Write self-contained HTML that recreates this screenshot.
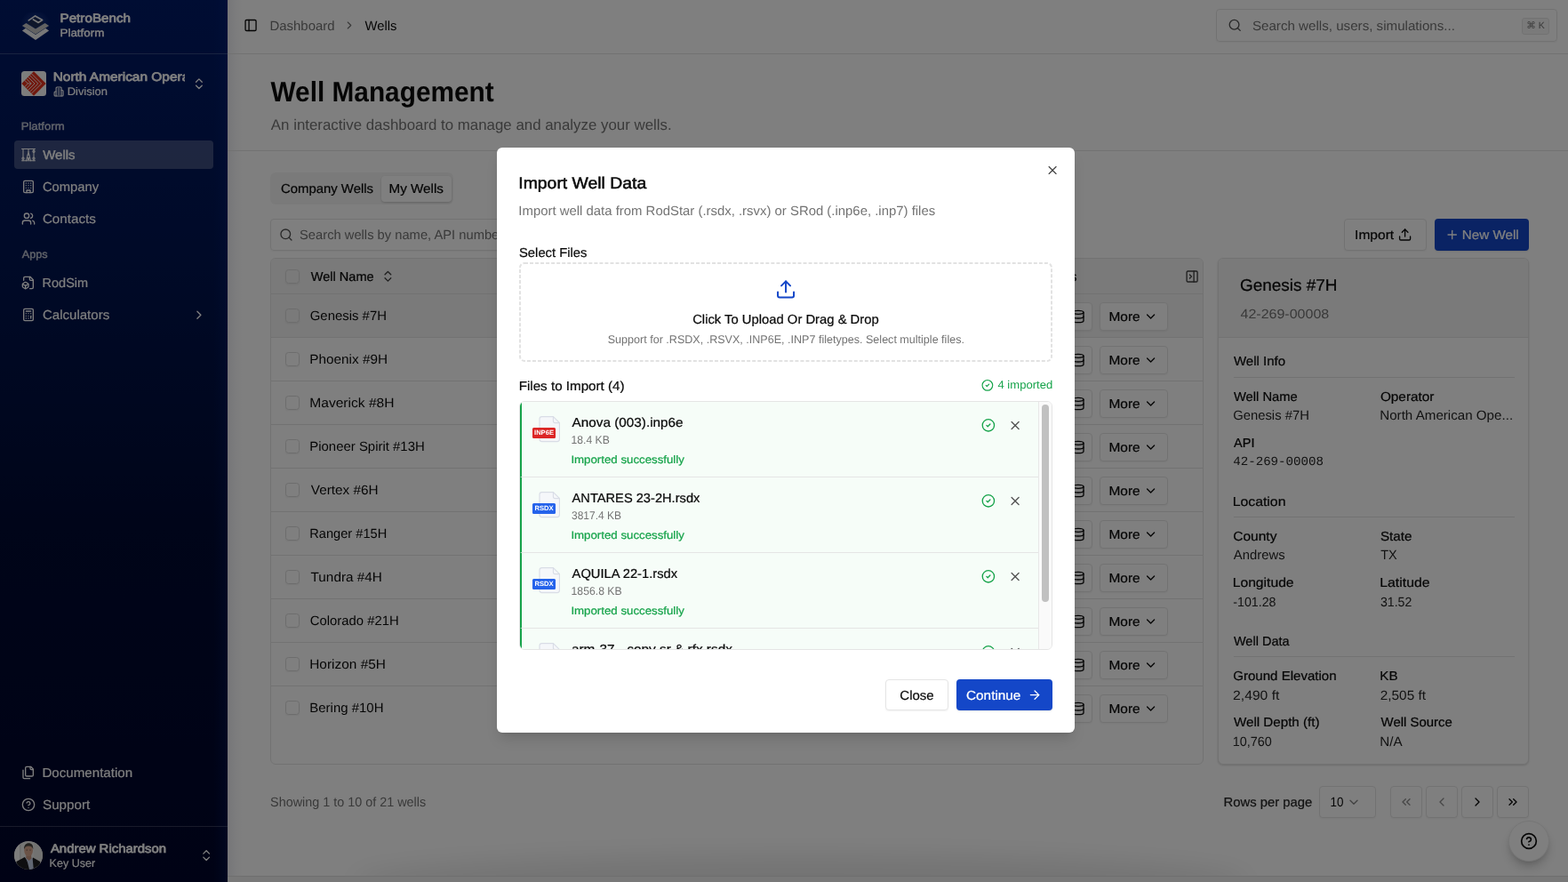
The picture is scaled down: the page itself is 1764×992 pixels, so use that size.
<!DOCTYPE html>
<html lang="en">
<head>
<meta charset="utf-8">
<title>Well Management – PetroBench Platform</title>
<meta name="viewport" content="width=1764, initial-scale=1">
<style>
*{box-sizing:border-box;margin:0;padding:0}
html,body{width:1764px;height:992px;overflow:hidden;background:#fff}
body{text-rendering:geometricPrecision;font-family:"Liberation Sans",sans-serif;font-size:14.8px;line-height:20px;color:#0a0a0a;position:relative}
svg{display:block;flex:none}
button{font:inherit;color:inherit;background:none;border:0;text-rendering:inherit;letter-spacing:inherit;text-align:left;padding:0;margin:0}
h1,h2,h3,h4,p,label{font-weight:400;font-size:inherit}
.abs{position:absolute}
.x{position:absolute;white-space:nowrap;display:block}
.r{-webkit-text-stroke:0}
.m{-webkit-text-stroke:.22px currentColor}
.sb{-webkit-text-stroke:.52px currentColor}
#sidebar .r{-webkit-text-stroke:.16px currentColor}
#sidebar .m{-webkit-text-stroke:.38px currentColor}
#sidebar .sb{-webkit-text-stroke:.72px currentColor}
.b{font-weight:700}
.mono{font-family:"Liberation Mono","DejaVu Sans Mono",monospace}
#sidebar,#main,#dlg,#overlay{will-change:transform}

/* ---------- sidebar ---------- */
#sidebar{position:absolute;left:0;top:0;width:256px;height:992px;color:#fff;
  background:linear-gradient(90deg,rgba(0,30,120,0) 0,rgba(0,30,120,0) 240px,rgba(0,40,140,.22) 256px),linear-gradient(180deg,#001a66 0,#00144f 30%,#000a32 60%,#00052a 100%)}
#sidebar .brand{position:absolute;left:0;top:0;width:256px;height:61px;border-bottom:1px solid rgba(255,255,255,.2)}
#sidebar .logo{position:absolute;left:24px;top:14px}
#sidebar .olog{position:absolute;left:24px;top:80px;width:28px;height:28px;border-radius:3.5px;overflow:hidden}
#sidebar .oname{position:absolute;left:56px;top:78px;width:152.3px;height:20px;overflow:hidden}
#sidebar .glabel{color:rgba(245,245,245,.7)}
#sidebar .item{position:absolute;left:16px;width:224px;height:32px;border-radius:4px;display:block;color:inherit}
#sidebar .item.active{background:rgba(255,255,255,.235)}
#sidebar .foot{position:absolute;left:0;top:929px;width:256px;height:63px;border-top:1px solid rgba(255,255,255,.2)}
#sidebar .avatar{position:absolute;left:16px;top:946px;width:32px;height:32px;border-radius:50%;overflow:hidden}

/* ---------- main ---------- */
#main{position:absolute;left:256px;top:0;width:1508px;height:992px;background:#fff}
#main .sbshadow{position:absolute;left:0;top:0;width:18px;height:992px;background:linear-gradient(90deg,rgba(20,30,90,.09),rgba(20,30,90,.03) 45%,rgba(20,30,90,0))}
#topbar{position:absolute;left:0;top:0;width:1508px;height:61px;border-bottom:1px solid #e5e5e5}
.search{position:absolute;left:1112px;top:10px;width:384px;height:37px;border:1px solid #e5e5e5;border-radius:4px;box-shadow:0 1px 2px rgba(0,0,0,.05)}
kbd{position:absolute;left:343px;top:9px;width:31px;height:19px;border:1px solid #e5e5e5;border-radius:3px;background:#f5f5f5;font-family:"Liberation Sans","DejaVu Sans",sans-serif;font-size:10.5px;line-height:17px;text-align:center;color:#737373}
#phead{position:absolute;left:0;top:61px;width:1508px;height:109px;border-bottom:1px solid #e5e5e5}
.tabs{position:absolute;left:48px;top:194px;width:206px;height:36px;border-radius:6px;background:#f5f5f5}
.tabs .on{position:absolute;left:125px;top:4px;width:79px;height:29px;background:#fff;border-radius:4px;box-shadow:0 1px 3px rgba(0,0,0,.12),0 1px 2px rgba(0,0,0,.08)}
.wsearch{position:absolute;left:48px;top:246px;width:384px;height:36px;border:1px solid #e5e5e5;border-radius:4px;box-shadow:0 1px 2px rgba(0,0,0,.05)}
.btn{position:absolute;height:36px;border-radius:4px;display:block}
.btn.outline{border:1px solid #e5e5e5;background:#fff;box-shadow:0 1px 2px rgba(0,0,0,.05)}
.btn.primary{background:#1447c8;color:#fff;box-shadow:0 1px 2px rgba(0,0,0,.1)}
#tbl{position:absolute;left:48px;top:290px;width:1050px;height:570px;border:1px solid #e5e5e5;border-radius:6px;overflow:hidden;background:#fff}
#tbl .hrow{position:absolute;left:0;top:0;width:1048px;height:40px;background:#f4f4f4;border-bottom:1px solid #e5e5e5}
#tbl .row{position:absolute;left:0;width:1048px;height:49px;border-bottom:1px solid #e5e5e5}
#tbl .row.sel{background:#f4f4f4}
#tbl .row.last{border-bottom:0}
.cb{position:absolute;left:16px;width:16px;height:16px;border:1px solid #dadada;border-radius:3.5px;box-shadow:0 1px 2px rgba(0,0,0,.06)}
#tbl .more{position:absolute;left:932px;top:9px;width:77px;height:32px;border:1px solid #e5e5e5;border-radius:4px;background:#fff;box-shadow:0 1px 2px rgba(0,0,0,.05)}
#tbl .dbb{position:absolute;left:892px;top:9px;width:32px;height:32px;border:1px solid #e5e5e5;border-radius:4px;background:#fff;box-shadow:0 1px 2px rgba(0,0,0,.05)}
#detail{position:absolute;left:1114px;top:290px;width:350px;height:570px;border:1px solid #e5e5e5;border-radius:6px;overflow:hidden;background:#fff;box-shadow:0 1px 3px rgba(0,0,0,.1),0 1px 2px rgba(0,0,0,.06)}
#detail .dh{position:absolute;left:0;top:0;width:348px;height:89px;background:#f5f5f5;border-bottom:1px solid #e5e5e5}
#detail hr{position:absolute;left:16.5px;width:316px;height:1px;border:0;background:#e5e5e5}
.pbtn{position:absolute;top:884px;display:block;width:36px;height:36px;border:1px solid #e5e5e5;border-radius:4px;background:#fff;box-shadow:0 1px 2px rgba(0,0,0,.05)}
.pbtn.dis svg{opacity:.45}
#help{position:absolute;left:1441px;top:923px;width:46px;height:46px;border-radius:50%;background:#fff;border:1px solid #ececec;box-shadow:0 8px 14px -3px rgba(0,0,0,.22),0 3px 6px -2px rgba(0,0,0,.12)}
#botline{position:absolute;left:0;top:985px;width:1508px;height:7px;background:#f0f0f0;border-top:1px solid #dedede}
#botblur{position:absolute;left:140px;top:962px;width:1010px;height:60px;border-radius:50%;background:rgba(0,0,0,.09);filter:blur(14px)}

/* ---------- overlay + dialog ---------- */
#overlay{position:absolute;left:0;top:0;width:1764px;height:992px;background:rgba(0,0,0,.5)}
#dlg{position:absolute;left:559px;top:166px;width:650px;height:658px;background:#fff;border-radius:6px;box-shadow:0 10px 15px -3px rgba(0,0,0,.13),0 4px 6px -4px rgba(0,0,0,.13)}
#drop{position:absolute;left:25px;top:129.4px;width:600px;height:112px}
#flist{position:absolute;left:25px;top:285px;width:600px;height:280px;border:1px solid #e5e5e5;border-radius:6px;overflow:hidden;background:#fff}
#flist .fi{position:absolute;left:0;width:583px;height:85px;background:#f6fdf8;border-left:2px solid #16a34a;border-bottom:1px solid #e5e5e5}
#flist .sb_{position:absolute;left:583px;top:0;width:15px;height:278px;background:#fafafa;border-left:1px solid #e8e8e8}
#flist .sb_ i{position:absolute;left:3px;top:3px;width:8px;height:222px;border-radius:4px;background:#c1c1c1}
.ficon{position:absolute;left:12px;top:14px;width:34px;height:32px}
.badge{position:absolute;left:0;top:15px;width:26px;height:11.5px;border-radius:1.5px;color:#fff;font-size:7.6px;line-height:11.5px;font-weight:700;text-align:center;white-space:nowrap;overflow:hidden}
</style>
</head>
<body>
<aside id="sidebar" aria-label="Sidebar">
<div class="brand">
<svg class="logo" width="32" height="32" viewBox="0 0 32 32" aria-hidden="true">
<defs><radialGradient id="lg" cx="50%" cy="45%" r="50%"><stop offset="0" stop-color="#3a5aa8" stop-opacity=".5"/><stop offset=".6" stop-color="#3a5aa8" stop-opacity=".22"/><stop offset="1" stop-color="#3a5aa8" stop-opacity="0"/></radialGradient></defs>
<circle cx="16" cy="15" r="17" fill="url(#lg)"/>
<path d="M.9 20.4 16 31 31.1 20.4 27.2 17.7 16 24.9 4.8 17.7Z" fill="#f0f0f0"/>
<path d="M.9 14.9 16 24.5 31.1 14.9 26.6 12 16 18.6 5.4 12Z" fill="#c4c4c4"/>
<path d="M6.6 11.6 16 5.4 25.4 11.6 16 18Z" fill="#1d2c55"/>
<path d="M8.3 8.9 15.6 3.9 23.6 8.5 19.3 11.4 13.4 7.9" fill="none" stroke="#f0f0f0" stroke-width="1.7" stroke-linejoin="round" stroke-linecap="round"/>
</svg>
<span class="x sb" style="transform:translateX(0.51px) scaleX(1.1066);transform-origin:0 0;left:67px;top:11px;font-size:13.76px;line-height:20px;">PetroBench</span>
<span class="x m" style="transform:translateX(0.49px) scaleX(1.1052);transform-origin:0 0;left:67px;top:29px;font-size:12.14px;line-height:16px;">Platform</span>
</div>
<span class="olog"><svg width="28" height="28" viewBox="0 0 28 28" aria-hidden="true">
<rect width="28" height="28" fill="#fbfbfb"/>
<path d="M14 .3 27.7 14 14 27.7 .3 14Z" fill="#e2311d"/>
<g fill="none" stroke="#fbfbfb" stroke-width=".85">
<path d="M11.3 2.7 22.6 14 11.3 25.3"/><path d="M9.4 4.6 18.8 14 9.4 23.4"/><path d="M7.5 6.5 15 14 7.5 21.5"/><path d="M5.6 8.4 11.2 14 5.6 19.6"/><path d="M3.7 10.3 7.4 14 3.7 17.7"/>
<path d="M11.2 14H7.4"/>
</g></svg></span>
<span class="oname"><span class="x sb" style="transform:translateX(0.64px) scaleX(1.1228);transform-origin:0 0;left:3px;top:-1px;font-size:13.76px;line-height:20px;">North American Operations</span></span>
<svg style="position:absolute;left:60px;top:97px;;overflow:visible" width="12" height="12" viewBox="0 0 24 24" fill="none" stroke="currentColor" stroke-width="2.2" stroke-linecap="round" stroke-linejoin="round" aria-hidden="true"><g transform="translate(0.2 0)"><path d="M6 22V4a2 2 0 0 1 2-2h8a2 2 0 0 1 2 2v18Z"/><path d="M6 12H4a2 2 0 0 0-2 2v6a2 2 0 0 0 2 2h2"/><path d="M18 9h2a2 2 0 0 1 2 2v9a2 2 0 0 1-2 2h-2"/><path d="M10 6h4"/><path d="M10 10h4"/><path d="M10 14h4"/><path d="M10 18h4"/></g></svg>
<span class="x r" style="transform:translateX(0.68px) scaleX(1.0386);transform-origin:0 0;left:75px;top:95px;font-size:12.46px;line-height:16px;">Division</span>
<svg style="position:absolute;left:215px;top:86px;;overflow:visible" width="16" height="16" viewBox="0 0 24 24" fill="none" stroke="currentColor" stroke-width="2" stroke-linecap="round" stroke-linejoin="round" aria-hidden="true"><g transform="translate(1.35 0.3)"><path d="m7 15 5 5 5-5"/><path d="m7 9 5-5 5 5"/></g></svg>
<nav aria-label="Main navigation">
<span class="x m glabel" style="transform:translateX(0.68px) scaleX(1.0844);transform-origin:0 0;left:23px;top:134px;font-size:12.14px;line-height:16px;">Platform</span>
<a class="item active" style="top:158px"><svg style="position:absolute;left:8px;top:8px;" width="16" height="16" viewBox="0 0 24 24" fill="none" stroke="currentColor" stroke-width="1.6" stroke-linecap="round" stroke-linejoin="round" aria-hidden="true"><path d="M.8 2.2h22.4"/><path d="M.8 22.2h22.4"/><path d="M3 2.2v20"/><path d="M21 2.2v20"/><path d="M8.2 22.2 12 7.2l3.8 15"/><path d="M9.6 17h4.8"/><path d="M10.7 12.4h2.6"/><path d="M12 2.2v5"/><circle cx="3" cy="18.2" r="1.7"/><circle cx="21" cy="18.2" r="1.7"/><circle cx="21" cy="6.4" r="1.7"/><circle cx="12" cy="19.4" r="1.1"/></svg><span class="x m" style="transform:translateX(0.22px) scaleX(1.0506);transform-origin:0 0;left:32px;top:7px;font-size:14.25px;line-height:20px;">Wells</span></a>
<a class="item" style="top:194px"><svg style="position:absolute;left:8px;top:8px;" width="16" height="16" viewBox="0 0 24 24" fill="none" stroke="currentColor" stroke-width="2" stroke-linecap="round" stroke-linejoin="round" aria-hidden="true"><rect x="4" y="2" width="16" height="20" rx="2"/><path d="M9 22v-4h6v4"/><path d="M8 6h.01"/><path d="M16 6h.01"/><path d="M12 6h.01"/><path d="M12 10h.01"/><path d="M12 14h.01"/><path d="M16 10h.01"/><path d="M16 14h.01"/><path d="M8 10h.01"/><path d="M8 14h.01"/></svg><span class="x r" style="transform:translateX(0.89px) scaleX(1.0143);transform-origin:0 0;left:31px;top:7px;font-size:14.57px;line-height:20px;">Company</span></a>
<a class="item" style="top:230px"><svg style="position:absolute;left:8px;top:8px;" width="16" height="16" viewBox="0 0 24 24" fill="none" stroke="currentColor" stroke-width="2" stroke-linecap="round" stroke-linejoin="round" aria-hidden="true"><path d="M16 21v-2a4 4 0 0 0-4-4H6a4 4 0 0 0-4 4v2"/><circle cx="9" cy="7" r="4"/><path d="M22 21v-2a4 4 0 0 0-3-3.87"/><path d="M16 3.13a4 4 0 0 1 0 7.75"/></svg><span class="x r" style="transform:translateX(0.91px) scaleX(1.0416);transform-origin:0 0;left:31px;top:7px;font-size:14.57px;line-height:20px;">Contacts</span></a>
<span class="x m glabel" style="transform:translateX(0.87px) scaleX(1.0420);transform-origin:0 0;left:24px;top:278px;font-size:12.14px;line-height:16px;">Apps</span>
<a class="item" style="top:302px"><svg style="position:absolute;left:8px;top:8px;" width="16" height="16" viewBox="0 0 24 24" fill="none" stroke="currentColor" stroke-width="2" stroke-linecap="round" stroke-linejoin="round" aria-hidden="true"><path d="M14.5 22H18a2 2 0 0 0 2-2V7l-5-5H6a2 2 0 0 0-2 2v4"/><path d="M14 2v4a2 2 0 0 0 2 2h4"/><path d="M3 13.1a2 2 0 0 0-1 1.76v3.24a2 2 0 0 0 .97 1.78L6 21.7a2 2 0 0 0 2.03.01L11 19.9a2 2 0 0 0 1-1.76V14.9a2 2 0 0 0-.97-1.78L8 11.3a2 2 0 0 0-2.03-.01Z"/><path d="M7 17v5"/><path d="M11.7 14.2 7 17l-4.7-2.8"/></svg><span class="x r" style="transform:translateX(0.59px) scaleX(0.9939);transform-origin:0 0;left:31px;top:7px;font-size:14.57px;line-height:20px;">RodSim</span></a>
<a class="item" style="top:338px"><svg style="position:absolute;left:8px;top:8px;" width="16" height="16" viewBox="0 0 24 24" fill="none" stroke="currentColor" stroke-width="2" stroke-linecap="round" stroke-linejoin="round" aria-hidden="true"><rect x="4" y="2" width="16" height="20" rx="2"/><path d="M8 6h8"/><path d="M16 14v4"/><path d="M16 10h.01"/><path d="M12 10h.01"/><path d="M8 10h.01"/><path d="M12 14h.01"/><path d="M8 14h.01"/><path d="M12 18h.01"/><path d="M8 18h.01"/></svg><span class="x r" style="transform:translateX(0.92px) scaleX(1.0330);transform-origin:0 0;left:31px;top:7px;font-size:14.57px;line-height:20px;">Calculators</span><svg style="position:absolute;left:199px;top:8px;;overflow:visible" width="16" height="16" viewBox="0 0 24 24" fill="none" stroke="currentColor" stroke-width="2" stroke-linecap="round" stroke-linejoin="round" aria-hidden="true"><g transform="translate(1.35 0.3)"><path d="m9 18 6-6-6-6"/></g></svg></a>
<a class="item" style="top:853px"><svg style="position:absolute;left:8px;top:8px;" width="16" height="16" viewBox="0 0 24 24" fill="none" stroke="currentColor" stroke-width="2" stroke-linecap="round" stroke-linejoin="round" aria-hidden="true"><path d="M20 7h-3a2 2 0 0 1-2-2V2"/><path d="M9 18a2 2 0 0 1-2-2V4a2 2 0 0 1 2-2h7l4 4v10a2 2 0 0 1-2 2Z"/><path d="M3 7.6v12.8A1.6 1.6 0 0 0 4.6 22h9.8"/></svg><span class="x r" style="transform:translateX(0.44px) scaleX(1.0379);transform-origin:0 0;left:31px;top:7px;font-size:14.57px;line-height:20px;">Documentation</span></a>
<a class="item" style="top:889px"><svg style="position:absolute;left:8px;top:8px;" width="16" height="16" viewBox="0 0 24 24" fill="none" stroke="currentColor" stroke-width="2" stroke-linecap="round" stroke-linejoin="round" aria-hidden="true"><circle cx="12" cy="12" r="10"/><path d="M9.09 9a3 3 0 0 1 5.83 1c0 2-3 3-3 3"/><path d="M12 17h.01"/></svg><span class="x r" style="transform:translateX(0.99px) scaleX(1.0436);transform-origin:0 0;left:31px;top:7px;font-size:14.57px;line-height:20px;">Support</span></a>
</nav>
<div class="foot"></div>
<span class="avatar"><svg width="32" height="32" viewBox="0 0 32 32" aria-hidden="true">
<rect width="32" height="32" fill="#ededeb"/>
<rect x="0" y="0" width="6" height="32" fill="#fafaf8"/><rect x="6" y="0" width="1.5" height="32" fill="#d9d9d7"/>
<rect x="22" y="0" width="10" height="32" fill="#e4e4e2"/>
<path d="M2.5 23 11.8 18 17 25l4.1-6.4L29 23l2 9H1Z" fill="#1d1d20"/>
<path d="M12.4 17.4 20.6 18.8 21.8 32H17l-2-8Z" fill="#c3cee6"/>
<path d="M13.6 14.5h5.4l.4 5-2.6 2.6-3.6-3Z" fill="#c99883"/>
<ellipse cx="16.1" cy="10.6" rx="4.9" ry="6.5" fill="#d7a68f"/>
<path d="M11 9.4C10.8 4.4 13.4 2.3 16.3 2.3c3.2 0 5.2 1.9 5 7.1-.8-2.8-2.2-4-5.100-4s-4.300 1.200-5.200 4Z" fill="#4b4641"/>
<circle cx="14.200" cy="10" r=".55" fill="#3a2f2a"/><circle cx="18" cy="10" r=".55" fill="#3a2f2a"/>
</svg></span>
<span class="x sb" style="transform:translateX(0.9px) scaleX(1.0848);transform-origin:0 0;left:56px;top:945px;font-size:13.76px;line-height:20px;">Andrew Richardson</span>
<span class="x r" style="transform:translateX(0.62px) scaleX(1.0070);transform-origin:0 0;left:55px;top:963px;font-size:12.46px;line-height:16px;">Key User</span>
<svg style="position:absolute;left:224px;top:954px;;overflow:visible" width="16" height="16" viewBox="0 0 24 24" fill="none" stroke="currentColor" stroke-width="2" stroke-linecap="round" stroke-linejoin="round" aria-hidden="true"><g transform="translate(0.225 0.15)"><path d="m7 15 5 5 5-5"/><path d="m7 9 5-5 5 5"/></g></svg>
</aside>
<main id="main">
<div class="sbshadow"></div>
<header id="topbar">
<svg style="position:absolute;left:18px;top:20px;;overflow:visible" width="16" height="16" viewBox="0 0 24 24" fill="none" stroke="currentColor" stroke-width="2" stroke-linecap="round" stroke-linejoin="round" aria-hidden="true"><g transform="translate(0.105 0.75)"><rect x="3" y="3" width="18" height="18" rx="2"/><path d="M9 3v18"/></g></svg>
<nav aria-label="Breadcrumb">
<span class="x r" style="transform:translateX(0.47px) scaleX(1.0096);transform-origin:0 0;left:47px;top:20px;font-size:14.8px;line-height:20px;color:#737373;">Dashboard</span>
<svg style="position:absolute;left:130px;top:21px;color:#737373;;overflow:visible" width="14" height="14" viewBox="0 0 24 24" fill="none" stroke="currentColor" stroke-width="2" stroke-linecap="round" stroke-linejoin="round" aria-hidden="true"><g transform="translate(0 0.857)"><path d="m9 18 6-6-6-6"/></g></svg>
<span class="x r" style="transform:translateX(0.58px);transform-origin:0 0;left:154px;top:20px;font-size:14.8px;line-height:20px;">Wells</span>
</nav>
<div class="search" role="search">
<svg style="position:absolute;left:12px;top:9px;color:#525252;;overflow:visible" width="16" height="16" viewBox="0 0 24 24" fill="none" stroke="currentColor" stroke-width="2" stroke-linecap="round" stroke-linejoin="round" aria-hidden="true"><g transform="translate(0.3 0.6)"><circle cx="11" cy="11" r="8"/><path d="m21 21-4.3-4.3"/></g></svg>
<span class="x r" style="transform:translateX(0.91px) scaleX(1.0234);transform-origin:0 0;left:39px;top:9px;font-size:14.8px;line-height:20px;color:#737373;">Search wells, users, simulations...</span>
<kbd>⌘ K</kbd>
</div>
</header>
<section id="phead"></section>
<h1 class="x b" style="transform:translateX(0.51px) scaleX(0.9396);transform-origin:0 0;left:48px;top:85px;font-size:31.72px;line-height:36px;">Well Management</h1>
<p class="x r" style="transform:translateX(0.87px) scaleX(0.9972);transform-origin:0 0;left:48px;top:129px;font-size:16.92px;line-height:24px;color:#737373;">An interactive dashboard to manage and analyze your wells.</p>
<div class="tabs" role="tablist">
<span class="x m" style="transform:translateX(0.95px) scaleX(1.0298);transform-origin:0 0;left:11px;top:9px;font-size:14.48px;line-height:20px;">Company Wells</span>
<span class="on" role="tab" aria-selected="true"><span class="x m" style="transform:translateX(0.46px) scaleX(1.0524);transform-origin:0 0;left:8px;top:5px;font-size:14.48px;line-height:20px;">My Wells</span></span>
</div>
<div class="wsearch">
<svg style="position:absolute;left:8px;top:9px;color:#525252;;overflow:visible" width="16" height="16" viewBox="0 0 24 24" fill="none" stroke="currentColor" stroke-width="2" stroke-linecap="round" stroke-linejoin="round" aria-hidden="true"><g transform="translate(1.42 0)"><circle cx="11" cy="11" r="8"/><path d="m21 21-4.3-4.3"/></g></svg>
<span class="x r" style="transform:translateX(0.03px) scaleX(0.9951);transform-origin:0 0;left:32px;top:8px;font-size:14.8px;line-height:20px;color:#737373;">Search wells by name, API number, or operator...</span>
</div>
<button class="btn outline" style="left:1256px;top:246px;width:93px">
<span class="x m" style="transform:translateX(0.07px) scaleX(1.0760);transform-origin:0 0;left:11px;top:8px;font-size:14.48px;line-height:20px;">Import</span>
<svg style="position:absolute;left:59px;top:9px;;overflow:visible" width="16" height="16" viewBox="0 0 24 24" fill="none" stroke="currentColor" stroke-width="2" stroke-linecap="round" stroke-linejoin="round" aria-hidden="true"><g transform="translate(0.9 0)"><path d="M21 15v4a2 2 0 0 1-2 2H5a2 2 0 0 1-2-2v-4"/><path d="m17 8-5-5-5 5"/><path d="M12 3v12"/></g></svg>
</button>
<button class="btn primary" style="left:1358px;top:246px;width:106px">
<svg style="position:absolute;left:11px;top:10px;color:#fff;;overflow:visible" width="16" height="16" viewBox="0 0 24 24" fill="none" stroke="currentColor" stroke-width="2" stroke-linecap="round" stroke-linejoin="round" aria-hidden="true"><g transform="translate(1.05 0)"><path d="M5 12h14"/><path d="M12 5v14"/></g></svg>
<span class="x m" style="transform:translateX(0.86px) scaleX(1.0493);transform-origin:0 0;left:30px;top:9px;font-size:14.48px;line-height:20px;color:#fff;">New Well</span>
</button>
<div id="tbl" role="table">
<div class="hrow" role="row">
<span class="cb" style="top:11.5px"></span>
<span class="x m" style="transform:translateX(0.75px) scaleX(1.0055);transform-origin:0 0;left:44px;top:11px;font-size:14.48px;line-height:20px;">Well Name</span>
<svg style="position:absolute;left:123px;top:11px;color:#404040;;overflow:visible" width="16" height="16" viewBox="0 0 24 24" fill="none" stroke="currentColor" stroke-width="2" stroke-linecap="round" stroke-linejoin="round" aria-hidden="true"><g transform="translate(0.6 1.2)"><path d="m7 15 5 5 5-5"/><path d="m7 9 5-5 5 5"/></g></svg>
<span class="x m" style="transform:translateX(0.58px) scaleX(1.0720);transform-origin:0 0;left:855px;top:11px;font-size:14.48px;line-height:20px;">Actions</span>
<svg style="position:absolute;left:1028px;top:12px;color:#404040;;overflow:visible" width="16" height="16" viewBox="0 0 24 24" fill="none" stroke="currentColor" stroke-width="2" stroke-linecap="round" stroke-linejoin="round" aria-hidden="true"><g transform="translate(0.15 0)"><rect x="3" y="3" width="18" height="18" rx="2"/><path d="M15 3v18"/><path d="m8 9 3 3-3 3"/></g></svg>
</div>
<div class="row sel" role="row" style="top:40px">
<span class="cb" style="top:16px"></span>
<span class="x r" style="transform:translateX(0.75px) scaleX(1.0078);transform-origin:0 0;left:43px;top:15px;font-size:14.8px;line-height:20px;">Genesis #7H</span>
<span class="dbb"><svg style="position:absolute;left:7px;top:7px" width="16" height="16" viewBox="0 0 24 24" fill="none" stroke="currentColor" stroke-width="2" stroke-linecap="round" stroke-linejoin="round" aria-hidden="true"><ellipse cx="12" cy="5" rx="9" ry="3"/><path d="M3 5v14a9 3 0 0 0 18 0V5"/><path d="M3 12a9 3 0 0 0 18 0"/></svg></span>
<button class="more"><span class="x m" style="transform:translateX(0.44px) scaleX(1.0688);transform-origin:0 0;left:9px;top:6px;font-size:14.48px;line-height:20px;">More</span><svg style="position:absolute;left:48px;top:7px;;overflow:visible" width="16" height="16" viewBox="0 0 24 24" fill="none" stroke="currentColor" stroke-width="2" stroke-linecap="round" stroke-linejoin="round" aria-hidden="true"><g transform="translate(0.9 0)"><path d="m6 9 6 6 6-6"/></g></svg></button>
</div>
<div class="row" role="row" style="top:89px">
<span class="cb" style="top:16px"></span>
<span class="x r" style="transform:translateX(0.24px) scaleX(1.0357);transform-origin:0 0;left:43px;top:15px;font-size:14.8px;line-height:20px;">Phoenix #9H</span>
<span class="dbb"><svg style="position:absolute;left:7px;top:7px" width="16" height="16" viewBox="0 0 24 24" fill="none" stroke="currentColor" stroke-width="2" stroke-linecap="round" stroke-linejoin="round" aria-hidden="true"><ellipse cx="12" cy="5" rx="9" ry="3"/><path d="M3 5v14a9 3 0 0 0 18 0V5"/><path d="M3 12a9 3 0 0 0 18 0"/></svg></span>
<button class="more"><span class="x m" style="transform:translateX(0.44px) scaleX(1.0688);transform-origin:0 0;left:9px;top:6px;font-size:14.48px;line-height:20px;">More</span><svg style="position:absolute;left:48px;top:7px;;overflow:visible" width="16" height="16" viewBox="0 0 24 24" fill="none" stroke="currentColor" stroke-width="2" stroke-linecap="round" stroke-linejoin="round" aria-hidden="true"><g transform="translate(0.9 0)"><path d="m6 9 6 6 6-6"/></g></svg></button>
</div>
<div class="row" role="row" style="top:138px">
<span class="cb" style="top:16px"></span>
<span class="x r" style="transform:translateX(0.22px) scaleX(1.0536);transform-origin:0 0;left:43px;top:15px;font-size:14.8px;line-height:20px;">Maverick #8H</span>
<span class="dbb"><svg style="position:absolute;left:7px;top:7px" width="16" height="16" viewBox="0 0 24 24" fill="none" stroke="currentColor" stroke-width="2" stroke-linecap="round" stroke-linejoin="round" aria-hidden="true"><ellipse cx="12" cy="5" rx="9" ry="3"/><path d="M3 5v14a9 3 0 0 0 18 0V5"/><path d="M3 12a9 3 0 0 0 18 0"/></svg></span>
<button class="more"><span class="x m" style="transform:translateX(0.44px) scaleX(1.0688);transform-origin:0 0;left:9px;top:6px;font-size:14.48px;line-height:20px;">More</span><svg style="position:absolute;left:48px;top:7px;;overflow:visible" width="16" height="16" viewBox="0 0 24 24" fill="none" stroke="currentColor" stroke-width="2" stroke-linecap="round" stroke-linejoin="round" aria-hidden="true"><g transform="translate(0.9 0)"><path d="m6 9 6 6 6-6"/></g></svg></button>
</div>
<div class="row" role="row" style="top:187px">
<span class="cb" style="top:16px"></span>
<span class="x r" style="transform:translateX(0.28px) scaleX(1.0088);transform-origin:0 0;left:43px;top:15px;font-size:14.8px;line-height:20px;">Pioneer Spirit #13H</span>
<span class="dbb"><svg style="position:absolute;left:7px;top:7px" width="16" height="16" viewBox="0 0 24 24" fill="none" stroke="currentColor" stroke-width="2" stroke-linecap="round" stroke-linejoin="round" aria-hidden="true"><ellipse cx="12" cy="5" rx="9" ry="3"/><path d="M3 5v14a9 3 0 0 0 18 0V5"/><path d="M3 12a9 3 0 0 0 18 0"/></svg></span>
<button class="more"><span class="x m" style="transform:translateX(0.44px) scaleX(1.0688);transform-origin:0 0;left:9px;top:6px;font-size:14.48px;line-height:20px;">More</span><svg style="position:absolute;left:48px;top:7px;;overflow:visible" width="16" height="16" viewBox="0 0 24 24" fill="none" stroke="currentColor" stroke-width="2" stroke-linecap="round" stroke-linejoin="round" aria-hidden="true"><g transform="translate(0.9 0)"><path d="m6 9 6 6 6-6"/></g></svg></button>
</div>
<div class="row" role="row" style="top:236px">
<span class="cb" style="top:16px"></span>
<span class="x r" style="transform:translateX(0.83px) scaleX(1.0355);transform-origin:0 0;left:44px;top:15px;font-size:14.8px;line-height:20px;">Vertex #6H</span>
<span class="dbb"><svg style="position:absolute;left:7px;top:7px" width="16" height="16" viewBox="0 0 24 24" fill="none" stroke="currentColor" stroke-width="2" stroke-linecap="round" stroke-linejoin="round" aria-hidden="true"><ellipse cx="12" cy="5" rx="9" ry="3"/><path d="M3 5v14a9 3 0 0 0 18 0V5"/><path d="M3 12a9 3 0 0 0 18 0"/></svg></span>
<button class="more"><span class="x m" style="transform:translateX(0.44px) scaleX(1.0688);transform-origin:0 0;left:9px;top:6px;font-size:14.48px;line-height:20px;">More</span><svg style="position:absolute;left:48px;top:7px;;overflow:visible" width="16" height="16" viewBox="0 0 24 24" fill="none" stroke="currentColor" stroke-width="2" stroke-linecap="round" stroke-linejoin="round" aria-hidden="true"><g transform="translate(0.9 0)"><path d="m6 9 6 6 6-6"/></g></svg></button>
</div>
<div class="row" role="row" style="top:285px">
<span class="cb" style="top:16px"></span>
<span class="x r" style="transform:translateX(0.3px) scaleX(0.9872);transform-origin:0 0;left:43px;top:15px;font-size:14.8px;line-height:20px;">Ranger #15H</span>
<span class="dbb"><svg style="position:absolute;left:7px;top:7px" width="16" height="16" viewBox="0 0 24 24" fill="none" stroke="currentColor" stroke-width="2" stroke-linecap="round" stroke-linejoin="round" aria-hidden="true"><ellipse cx="12" cy="5" rx="9" ry="3"/><path d="M3 5v14a9 3 0 0 0 18 0V5"/><path d="M3 12a9 3 0 0 0 18 0"/></svg></span>
<button class="more"><span class="x m" style="transform:translateX(0.44px) scaleX(1.0688);transform-origin:0 0;left:9px;top:6px;font-size:14.48px;line-height:20px;">More</span><svg style="position:absolute;left:48px;top:7px;;overflow:visible" width="16" height="16" viewBox="0 0 24 24" fill="none" stroke="currentColor" stroke-width="2" stroke-linecap="round" stroke-linejoin="round" aria-hidden="true"><g transform="translate(0.9 0)"><path d="m6 9 6 6 6-6"/></g></svg></button>
</div>
<div class="row" role="row" style="top:334px">
<span class="cb" style="top:16px"></span>
<span class="x r" style="transform:translateX(0.56px) scaleX(1.0354);transform-origin:0 0;left:44px;top:15px;font-size:14.8px;line-height:20px;">Tundra #4H</span>
<span class="dbb"><svg style="position:absolute;left:7px;top:7px" width="16" height="16" viewBox="0 0 24 24" fill="none" stroke="currentColor" stroke-width="2" stroke-linecap="round" stroke-linejoin="round" aria-hidden="true"><ellipse cx="12" cy="5" rx="9" ry="3"/><path d="M3 5v14a9 3 0 0 0 18 0V5"/><path d="M3 12a9 3 0 0 0 18 0"/></svg></span>
<button class="more"><span class="x m" style="transform:translateX(0.44px) scaleX(1.0688);transform-origin:0 0;left:9px;top:6px;font-size:14.48px;line-height:20px;">More</span><svg style="position:absolute;left:48px;top:7px;;overflow:visible" width="16" height="16" viewBox="0 0 24 24" fill="none" stroke="currentColor" stroke-width="2" stroke-linecap="round" stroke-linejoin="round" aria-hidden="true"><g transform="translate(0.9 0)"><path d="m6 9 6 6 6-6"/></g></svg></button>
</div>
<div class="row" role="row" style="top:383px">
<span class="cb" style="top:16px"></span>
<span class="x r" style="transform:translateX(0.75px) scaleX(1.0042);transform-origin:0 0;left:43px;top:15px;font-size:14.8px;line-height:20px;">Colorado #21H</span>
<span class="dbb"><svg style="position:absolute;left:7px;top:7px" width="16" height="16" viewBox="0 0 24 24" fill="none" stroke="currentColor" stroke-width="2" stroke-linecap="round" stroke-linejoin="round" aria-hidden="true"><ellipse cx="12" cy="5" rx="9" ry="3"/><path d="M3 5v14a9 3 0 0 0 18 0V5"/><path d="M3 12a9 3 0 0 0 18 0"/></svg></span>
<button class="more"><span class="x m" style="transform:translateX(0.44px) scaleX(1.0688);transform-origin:0 0;left:9px;top:6px;font-size:14.48px;line-height:20px;">More</span><svg style="position:absolute;left:48px;top:7px;;overflow:visible" width="16" height="16" viewBox="0 0 24 24" fill="none" stroke="currentColor" stroke-width="2" stroke-linecap="round" stroke-linejoin="round" aria-hidden="true"><g transform="translate(0.9 0)"><path d="m6 9 6 6 6-6"/></g></svg></button>
</div>
<div class="row" role="row" style="top:432px">
<span class="cb" style="top:16px"></span>
<span class="x r" style="transform:translateX(0.23px) scaleX(1.0429);transform-origin:0 0;left:43px;top:15px;font-size:14.8px;line-height:20px;">Horizon #5H</span>
<span class="dbb"><svg style="position:absolute;left:7px;top:7px" width="16" height="16" viewBox="0 0 24 24" fill="none" stroke="currentColor" stroke-width="2" stroke-linecap="round" stroke-linejoin="round" aria-hidden="true"><ellipse cx="12" cy="5" rx="9" ry="3"/><path d="M3 5v14a9 3 0 0 0 18 0V5"/><path d="M3 12a9 3 0 0 0 18 0"/></svg></span>
<button class="more"><span class="x m" style="transform:translateX(0.44px) scaleX(1.0688);transform-origin:0 0;left:9px;top:6px;font-size:14.48px;line-height:20px;">More</span><svg style="position:absolute;left:48px;top:7px;;overflow:visible" width="16" height="16" viewBox="0 0 24 24" fill="none" stroke="currentColor" stroke-width="2" stroke-linecap="round" stroke-linejoin="round" aria-hidden="true"><g transform="translate(0.9 0)"><path d="m6 9 6 6 6-6"/></g></svg></button>
</div>
<div class="row last" role="row" style="top:481px">
<span class="cb" style="top:16px"></span>
<span class="x r" style="transform:translateX(0.27px) scaleX(1.0113);transform-origin:0 0;left:43px;top:15px;font-size:14.8px;line-height:20px;">Bering #10H</span>
<span class="dbb"><svg style="position:absolute;left:7px;top:7px" width="16" height="16" viewBox="0 0 24 24" fill="none" stroke="currentColor" stroke-width="2" stroke-linecap="round" stroke-linejoin="round" aria-hidden="true"><ellipse cx="12" cy="5" rx="9" ry="3"/><path d="M3 5v14a9 3 0 0 0 18 0V5"/><path d="M3 12a9 3 0 0 0 18 0"/></svg></span>
<button class="more"><span class="x m" style="transform:translateX(0.44px) scaleX(1.0688);transform-origin:0 0;left:9px;top:6px;font-size:14.48px;line-height:20px;">More</span><svg style="position:absolute;left:48px;top:7px;;overflow:visible" width="16" height="16" viewBox="0 0 24 24" fill="none" stroke="currentColor" stroke-width="2" stroke-linecap="round" stroke-linejoin="round" aria-hidden="true"><g transform="translate(0.9 0)"><path d="m6 9 6 6 6-6"/></g></svg></button>
</div>
</div>
<aside id="detail" aria-label="Well details">
<div class="dh"></div>
<h3 class="x m" style="transform:translateX(0.96px) scaleX(1.0144);transform-origin:0 0;left:23px;top:16px;font-size:18.71px;line-height:28px;">Genesis #7H</h3>
<span class="x r" style="transform:translateX(0.53px) scaleX(1.0815);transform-origin:0 0;left:24px;top:53px;font-size:14.8px;line-height:20px;color:#737373;">42-269-00008</span>
<h4 class="x m" style="transform:translateX(0.94px) scaleX(1.0365);transform-origin:0 0;left:16px;top:106px;font-size:14.48px;line-height:20px;">Well Info</h4>
<hr style="top:133px">
<span class="x m" style="transform:translateX(0.95px) scaleX(1.0184);transform-origin:0 0;left:16px;top:146px;font-size:14.48px;line-height:20px;">Well Name</span>
<span class="x r" style="letter-spacing:0.02px;transform:translateX(0.16px);transform-origin:0 0;left:16px;top:167px;font-size:14.8px;line-height:20px;color:#262626;">Genesis #7H</span>
<span class="x m" style="transform:translateX(0.88px) scaleX(1.0605);transform-origin:0 0;left:181px;top:146px;font-size:14.48px;line-height:20px;">Operator</span>
<span class="x r" style="transform:translateX(0.26px) scaleX(1.0235);transform-origin:0 0;left:181px;top:167px;font-size:14.8px;line-height:20px;color:#262626;">North American Ope...</span>
<span class="x m" style="letter-spacing:0.058px;transform:translateX(0.98px);transform-origin:0 0;left:16px;top:198px;font-size:14.48px;line-height:20px;">API</span>
<span class="x r mono" style="transform:translateX(0.19px) scaleX(1.0101);transform-origin:0 0;left:16px;top:219px;font-size:14px;line-height:20px;color:#262626;">42-269-00008</span>
<h4 class="x m" style="transform:translateX(0.71px) scaleX(1.0914);transform-origin:0 0;left:15px;top:264px;font-size:14.48px;line-height:20px;">Location</h4>
<hr style="top:290px">
<span class="x m" style="transform:translateX(0.22px) scaleX(1.0732);transform-origin:0 0;left:16px;top:303px;font-size:14.48px;line-height:20px;">County</span>
<span class="x r" style="letter-spacing:0.048px;transform:translateX(0.87px);transform-origin:0 0;left:16px;top:324px;font-size:14.8px;line-height:20px;color:#262626;">Andrews</span>
<span class="x m" style="transform:translateX(0.92px) scaleX(1.0518);transform-origin:0 0;left:181px;top:303px;font-size:14.48px;line-height:20px;">State</span>
<span class="x r" style="transform:translateX(0.17px) scaleX(0.9793);transform-origin:0 0;left:182px;top:324px;font-size:14.8px;line-height:20px;color:#262626;">TX</span>
<span class="x m" style="transform:translateX(0.72px) scaleX(1.0834);transform-origin:0 0;left:15px;top:355px;font-size:14.48px;line-height:20px;">Longitude</span>
<span class="x r" style="transform:translateX(0.27px) scaleX(0.9594);transform-origin:0 0;left:16px;top:377px;font-size:14.8px;line-height:20px;color:#262626;">-101.28</span>
<span class="x m" style="transform:translateX(0.31px) scaleX(1.0908);transform-origin:0 0;left:181px;top:355px;font-size:14.48px;line-height:20px;">Latitude</span>
<span class="x r" style="transform:translateX(0.96px) scaleX(0.9546);transform-origin:0 0;left:181px;top:377px;font-size:14.8px;line-height:20px;color:#262626;">31.52</span>
<h4 class="x m" style="letter-spacing:0.024px;transform:translateX(0.95px);transform-origin:0 0;left:16px;top:421px;font-size:14.48px;line-height:20px;">Well Data</h4>
<hr style="top:447px">
<span class="x m" style="transform:translateX(0.25px) scaleX(1.0403);transform-origin:0 0;left:16px;top:460px;font-size:14.48px;line-height:20px;">Ground Elevation</span>
<span class="x r" style="transform:translateX(0.11px) scaleX(1.0593);transform-origin:0 0;left:16px;top:482px;font-size:14.8px;line-height:20px;color:#262626;">2,490 ft</span>
<span class="x m" style="transform:translateX(0.37px) scaleX(1.0472);transform-origin:0 0;left:181px;top:460px;font-size:14.48px;line-height:20px;">KB</span>
<span class="x r" style="transform:translateX(0.73px) scaleX(1.0387);transform-origin:0 0;left:181px;top:482px;font-size:14.8px;line-height:20px;color:#262626;">2,505 ft</span>
<span class="x m" style="transform:translateX(0.94px) scaleX(1.0475);transform-origin:0 0;left:16px;top:512px;font-size:14.48px;line-height:20px;">Well Depth (ft)</span>
<span class="x r" style="transform:translateX(0.81px) scaleX(0.9711);transform-origin:0 0;left:15px;top:534px;font-size:14.8px;line-height:20px;color:#262626;">10,760</span>
<span class="x m" style="transform:translateX(0.54px) scaleX(1.0331);transform-origin:0 0;left:182px;top:512px;font-size:14.48px;line-height:20px;">Well Source</span>
<span class="x r" style="transform:translateX(0.25px) scaleX(1.0286);transform-origin:0 0;left:181px;top:534px;font-size:14.8px;line-height:20px;color:#262626;">N/A</span>
</aside>
<div id="pager">
<span class="x r" style="transform:translateX(0.05px) scaleX(0.9723);transform-origin:0 0;left:48px;top:893px;font-size:14.8px;line-height:20px;color:#737373;">Showing 1 to 10 of 21 wells</span>
<span class="x m" style="transform:translateX(0.49px) scaleX(1.0239);transform-origin:0 0;left:1120px;top:893px;font-size:14.48px;line-height:20px;color:#262626;">Rows per page</span>
<div class="pbtn" role="combobox" style="left:1228px;width:64px">
<span class="x r" style="transform:translateX(0.58px) scaleX(0.9077);transform-origin:0 0;left:11px;top:8px;font-size:14.8px;line-height:20px;">10</span>
<svg style="position:absolute;left:30px;top:9px;opacity:.5;;overflow:visible" width="16" height="16" viewBox="0 0 24 24" fill="none" stroke="currentColor" stroke-width="2" stroke-linecap="round" stroke-linejoin="round" aria-hidden="true"><g transform="translate(0 0.45)"><path d="m6 9 6 6 6-6"/></g></svg>
</div>
<button class="pbtn dis" style="left:1308px"><svg style="position:absolute;left:9px;top:9px" width="16" height="16" viewBox="0 0 24 24" fill="none" stroke="currentColor" stroke-width="2" stroke-linecap="round" stroke-linejoin="round" aria-hidden="true"><path d="m11 17-5-5 5-5"/><path d="m18 17-5-5 5-5"/></svg></button>
<button class="pbtn dis" style="left:1348px"><svg style="position:absolute;left:9px;top:9px" width="16" height="16" viewBox="0 0 24 24" fill="none" stroke="currentColor" stroke-width="2" stroke-linecap="round" stroke-linejoin="round" aria-hidden="true"><path d="m15 18-6-6 6-6"/></svg></button>
<button class="pbtn" style="left:1388px"><svg style="position:absolute;left:9px;top:9px" width="16" height="16" viewBox="0 0 24 24" fill="none" stroke="currentColor" stroke-width="2" stroke-linecap="round" stroke-linejoin="round" aria-hidden="true"><path d="m9 18 6-6-6-6"/></svg></button>
<button class="pbtn" style="left:1428px"><svg style="position:absolute;left:9px;top:9px" width="16" height="16" viewBox="0 0 24 24" fill="none" stroke="currentColor" stroke-width="2" stroke-linecap="round" stroke-linejoin="round" aria-hidden="true"><path d="m6 17 5-5-5-5"/><path d="m13 17 5-5-5-5"/></svg></button>
</div>
<div id="botblur"></div>
<div id="botline"></div>
<button id="help" aria-label="Help"><svg style="position:absolute;left:12px;top:12px" width="20" height="20" viewBox="0 0 24 24" fill="none" stroke="currentColor" stroke-width="2" stroke-linecap="round" stroke-linejoin="round" aria-hidden="true"><circle cx="12" cy="12" r="10"/><path d="M9.09 9a3 3 0 0 1 5.83 1c0 2-3 3-3 3"/><path d="M12 17h.01"/></svg></button>
</main>
<div id="overlay"></div>
<div id="dlg" role="dialog" aria-modal="true" aria-label="Import Well Data">
<svg style="position:absolute;left:617px;top:17px;color:#404040;;overflow:visible" width="16" height="16" viewBox="0 0 24 24" fill="none" stroke="currentColor" stroke-width="1.7" stroke-linecap="round" stroke-linejoin="round" aria-hidden="true"><g transform="translate(0.15 0.75)"><path d="M18 6 6 18"/><path d="m6 6 12 12"/></g></svg>
<h2 class="x sb" style="transform:translateX(0.32px) scaleX(1.0603);transform-origin:0 0;left:24px;top:26px;font-size:18.28px;line-height:28px;">Import Well Data</h2>
<p class="x r" style="transform:translateX(0.32px) scaleX(1.0073);transform-origin:0 0;left:24px;top:62px;font-size:14.8px;line-height:20px;color:#737373;">Import well data from RodStar (.rsdx, .rsvx) or SRod (.inp6e, .inp7) files</p>
<label class="x m" style="transform:scaleX(1.0228);transform-origin:0 0;left:25px;top:109px;font-size:14.48px;line-height:20px;">Select Files</label>
<div id="drop">
<svg width="600" height="112" viewBox="0 0 600 112" style="position:absolute;left:0;top:0" aria-hidden="true"><rect x="1" y="1" width="598" height="110" rx="5" fill="none" stroke="#e2e2e2" stroke-width="2" stroke-dasharray="4 2.03"/></svg>
<svg style="position:absolute;left:288px;top:17.6px;color:#1447c8;;overflow:visible" width="24" height="24" viewBox="0 0 24 24" fill="none" stroke="currentColor" stroke-width="2" stroke-linecap="round" stroke-linejoin="round" aria-hidden="true"><g transform="translate(0.05 0.4)"><path d="M21 15v4a2 2 0 0 1-2 2H5a2 2 0 0 1-2-2v-4"/><path d="m17 8-5-5-5 5"/><path d="M12 3v12"/></g></svg>
<span class="x m" style="transform:translateX(0.16px) scaleX(1.0233);transform-origin:0 0;left:195px;top:54.6px;font-size:14.48px;line-height:20px;">Click To Upload Or Drag &amp; Drop</span>
<span class="x r" style="transform:translateX(0.73px) scaleX(0.9895);transform-origin:0 0;left:99px;top:78.6px;font-size:12.69px;line-height:16px;color:#737373;">Support for .RSDX, .RSVX, .INP6E, .INP7 filetypes. Select multiple files.</span>
</div>
<span class="x m" style="transform:translateX(0.64px) scaleX(1.0493);transform-origin:0 0;left:24px;top:259px;font-size:14.48px;line-height:20px;">Files to Import (4)</span>
<svg style="position:absolute;left:544px;top:260px;color:#16a34a;;overflow:visible" width="14" height="14" viewBox="0 0 24 24" fill="none" stroke="currentColor" stroke-width="2" stroke-linecap="round" stroke-linejoin="round" aria-hidden="true"><g transform="translate(1.54 0.6)"><circle cx="12" cy="12" r="10"/><path d="m9 12 2 2 4-4"/></g></svg>
<span class="x r" style="transform:translateX(0.47px) scaleX(1.0298);transform-origin:0 0;left:563px;top:259px;font-size:12.69px;line-height:16px;color:#16a34a;">4 imported</span>
<div id="flist" role="list">
<div class="fi" role="listitem" style="top:0px">
<span class="ficon"><svg width="34" height="32" viewBox="0 0 34 32" aria-hidden="true" style="position:absolute;left:0;top:0">
<path d="M10.6 2.6h12.8l7 7V28a2.6 2.6 0 0 1-2.6 2.6H10.6A2.6 2.6 0 0 1 8 28V5.2a2.6 2.6 0 0 1 2.6-2.6Z" fill="#f5f7fa" stroke="#d9dde6" stroke-width="1.1"/>
<path d="M23.4 2.6v4.8a2.2 2.2 0 0 0 2.2 2.2h4.8" fill="none" stroke="#d9dde6" stroke-width="1.1"/></svg>
<span class="badge" style="background:#dc2626">INP6E</span></span>
<span class="x m" style="transform:translateX(0.58px) scaleX(1.0570);transform-origin:0 0;left:56px;top:14px;font-size:14.48px;line-height:20px;">Anova (003).inp6e</span>
<span class="x r" style="transform:translateX(0.57px) scaleX(0.9582);transform-origin:0 0;left:55px;top:35px;font-size:12.69px;line-height:16px;color:#737373;">18.4 KB</span>
<span class="x m" style="transform:translateX(0.38px) scaleX(1.0731);transform-origin:0 0;left:55px;top:57px;font-size:12.37px;line-height:16px;color:#16a34a;">Imported successfully</span>
<svg style="position:absolute;left:516px;top:18px;color:#16a34a;;overflow:visible" width="16" height="16" viewBox="0 0 24 24" fill="none" stroke="currentColor" stroke-width="2" stroke-linecap="round" stroke-linejoin="round" aria-hidden="true"><g transform="translate(1.35 0.525)"><circle cx="12" cy="12" r="10"/><path d="m9 12 2 2 4-4"/></g></svg>
<svg style="position:absolute;left:547px;top:18px;color:#525252;;overflow:visible" width="16" height="16" viewBox="0 0 24 24" fill="none" stroke="currentColor" stroke-width="2" stroke-linecap="round" stroke-linejoin="round" aria-hidden="true"><g transform="translate(0.15 0.75)"><path d="M18 6 6 18"/><path d="m6 6 12 12"/></g></svg>
</div>
<div class="fi" role="listitem" style="top:85px">
<span class="ficon"><svg width="34" height="32" viewBox="0 0 34 32" aria-hidden="true" style="position:absolute;left:0;top:0">
<path d="M10.6 2.6h12.8l7 7V28a2.6 2.6 0 0 1-2.6 2.6H10.6A2.6 2.6 0 0 1 8 28V5.2a2.6 2.6 0 0 1 2.6-2.6Z" fill="#f5f7fa" stroke="#d9dde6" stroke-width="1.1"/>
<path d="M23.4 2.6v4.8a2.2 2.2 0 0 0 2.2 2.2h4.8" fill="none" stroke="#d9dde6" stroke-width="1.1"/></svg>
<span class="badge" style="background:#2563eb">RSDX</span></span>
<span class="x m" style="transform:translateX(0.58px) scaleX(1.0121);transform-origin:0 0;left:56px;top:14px;font-size:14.48px;line-height:20px;">ANTARES 23-2H.rsdx</span>
<span class="x r" style="transform:translateX(0.04px) scaleX(0.9430);transform-origin:0 0;left:56px;top:35px;font-size:12.69px;line-height:16px;color:#737373;">3817.4 KB</span>
<span class="x m" style="transform:translateX(0.38px) scaleX(1.0731);transform-origin:0 0;left:55px;top:57px;font-size:12.37px;line-height:16px;color:#16a34a;">Imported successfully</span>
<svg style="position:absolute;left:516px;top:18px;color:#16a34a;;overflow:visible" width="16" height="16" viewBox="0 0 24 24" fill="none" stroke="currentColor" stroke-width="2" stroke-linecap="round" stroke-linejoin="round" aria-hidden="true"><g transform="translate(1.35 0.525)"><circle cx="12" cy="12" r="10"/><path d="m9 12 2 2 4-4"/></g></svg>
<svg style="position:absolute;left:547px;top:18px;color:#525252;;overflow:visible" width="16" height="16" viewBox="0 0 24 24" fill="none" stroke="currentColor" stroke-width="2" stroke-linecap="round" stroke-linejoin="round" aria-hidden="true"><g transform="translate(0.15 0.75)"><path d="M18 6 6 18"/><path d="m6 6 12 12"/></g></svg>
</div>
<div class="fi" role="listitem" style="top:170px">
<span class="ficon"><svg width="34" height="32" viewBox="0 0 34 32" aria-hidden="true" style="position:absolute;left:0;top:0">
<path d="M10.6 2.6h12.8l7 7V28a2.6 2.6 0 0 1-2.6 2.6H10.6A2.6 2.6 0 0 1 8 28V5.2a2.6 2.6 0 0 1 2.6-2.6Z" fill="#f5f7fa" stroke="#d9dde6" stroke-width="1.1"/>
<path d="M23.4 2.6v4.8a2.2 2.2 0 0 0 2.2 2.2h4.8" fill="none" stroke="#d9dde6" stroke-width="1.1"/></svg>
<span class="badge" style="background:#2563eb">RSDX</span></span>
<span class="x m" style="transform:translateX(0.58px) scaleX(1.0159);transform-origin:0 0;left:56px;top:14px;font-size:14.48px;line-height:20px;">AQUILA 22-1.rsdx</span>
<span class="x r" style="transform:translateX(0.57px) scaleX(0.9630);transform-origin:0 0;left:55px;top:35px;font-size:12.69px;line-height:16px;color:#737373;">1856.8 KB</span>
<span class="x m" style="transform:translateX(0.38px) scaleX(1.0731);transform-origin:0 0;left:55px;top:57px;font-size:12.37px;line-height:16px;color:#16a34a;">Imported successfully</span>
<svg style="position:absolute;left:516px;top:18px;color:#16a34a;;overflow:visible" width="16" height="16" viewBox="0 0 24 24" fill="none" stroke="currentColor" stroke-width="2" stroke-linecap="round" stroke-linejoin="round" aria-hidden="true"><g transform="translate(1.35 0.525)"><circle cx="12" cy="12" r="10"/><path d="m9 12 2 2 4-4"/></g></svg>
<svg style="position:absolute;left:547px;top:18px;color:#525252;;overflow:visible" width="16" height="16" viewBox="0 0 24 24" fill="none" stroke="currentColor" stroke-width="2" stroke-linecap="round" stroke-linejoin="round" aria-hidden="true"><g transform="translate(0.15 0.75)"><path d="M18 6 6 18"/><path d="m6 6 12 12"/></g></svg>
</div>
<div class="fi" role="listitem" style="top:255px">
<span class="ficon"><svg width="34" height="32" viewBox="0 0 34 32" aria-hidden="true" style="position:absolute;left:0;top:0">
<path d="M10.6 2.6h12.8l7 7V28a2.6 2.6 0 0 1-2.6 2.6H10.6A2.6 2.6 0 0 1 8 28V5.2a2.6 2.6 0 0 1 2.6-2.6Z" fill="#f5f7fa" stroke="#d9dde6" stroke-width="1.1"/>
<path d="M23.4 2.6v4.8a2.2 2.2 0 0 0 2.2 2.2h4.8" fill="none" stroke="#d9dde6" stroke-width="1.1"/></svg>
<span class="badge" style="background:#2563eb">RSDX</span></span>
<span class="x m" style="transform:translateX(0.96px) scaleX(1.0613);transform-origin:0 0;left:55px;top:14px;font-size:14.48px;line-height:20px;">arm-37 - copy sr &amp; rfx.rsdx</span>
<span class="x r" style="transform:translateX(0.02px) scaleX(0.9520);transform-origin:0 0;left:56px;top:35px;font-size:12.69px;line-height:16px;color:#737373;">5210.3 KB</span>
<span class="x m" style="transform:translateX(0.38px) scaleX(1.0731);transform-origin:0 0;left:55px;top:57px;font-size:12.37px;line-height:16px;color:#16a34a;">Imported successfully</span>
<svg style="position:absolute;left:516px;top:18px;color:#16a34a;;overflow:visible" width="16" height="16" viewBox="0 0 24 24" fill="none" stroke="currentColor" stroke-width="2" stroke-linecap="round" stroke-linejoin="round" aria-hidden="true"><g transform="translate(1.35 0.525)"><circle cx="12" cy="12" r="10"/><path d="m9 12 2 2 4-4"/></g></svg>
<svg style="position:absolute;left:547px;top:18px;color:#525252;;overflow:visible" width="16" height="16" viewBox="0 0 24 24" fill="none" stroke="currentColor" stroke-width="2" stroke-linecap="round" stroke-linejoin="round" aria-hidden="true"><g transform="translate(0.15 0.75)"><path d="M18 6 6 18"/><path d="m6 6 12 12"/></g></svg>
</div>
<div class="sb_"><i></i></div>
</div>
<button class="btn outline" style="left:437px;top:598px;width:71px;height:35px">
<span class="x m" style="transform:translateX(0.35px) scaleX(1.0353);transform-origin:0 0;left:15px;top:8px;font-size:14.48px;line-height:20px;">Close</span>
</button>
<button class="btn primary" style="left:517px;top:598px;width:108px;height:35px">
<span class="x m" style="transform:translateX(0.03px) scaleX(1.0590);transform-origin:0 0;left:11px;top:9px;font-size:14.48px;line-height:20px;color:#fff;">Continue</span>
<svg style="position:absolute;left:80px;top:9px;color:#fff;;overflow:visible" width="16" height="16" viewBox="0 0 24 24" fill="none" stroke="currentColor" stroke-width="2" stroke-linecap="round" stroke-linejoin="round" aria-hidden="true"><g transform="translate(0.075 0.9)"><path d="M5 12h14"/><path d="m12 5 7 7-7 7"/></g></svg>
</button>
</div>
</body>
</html>
